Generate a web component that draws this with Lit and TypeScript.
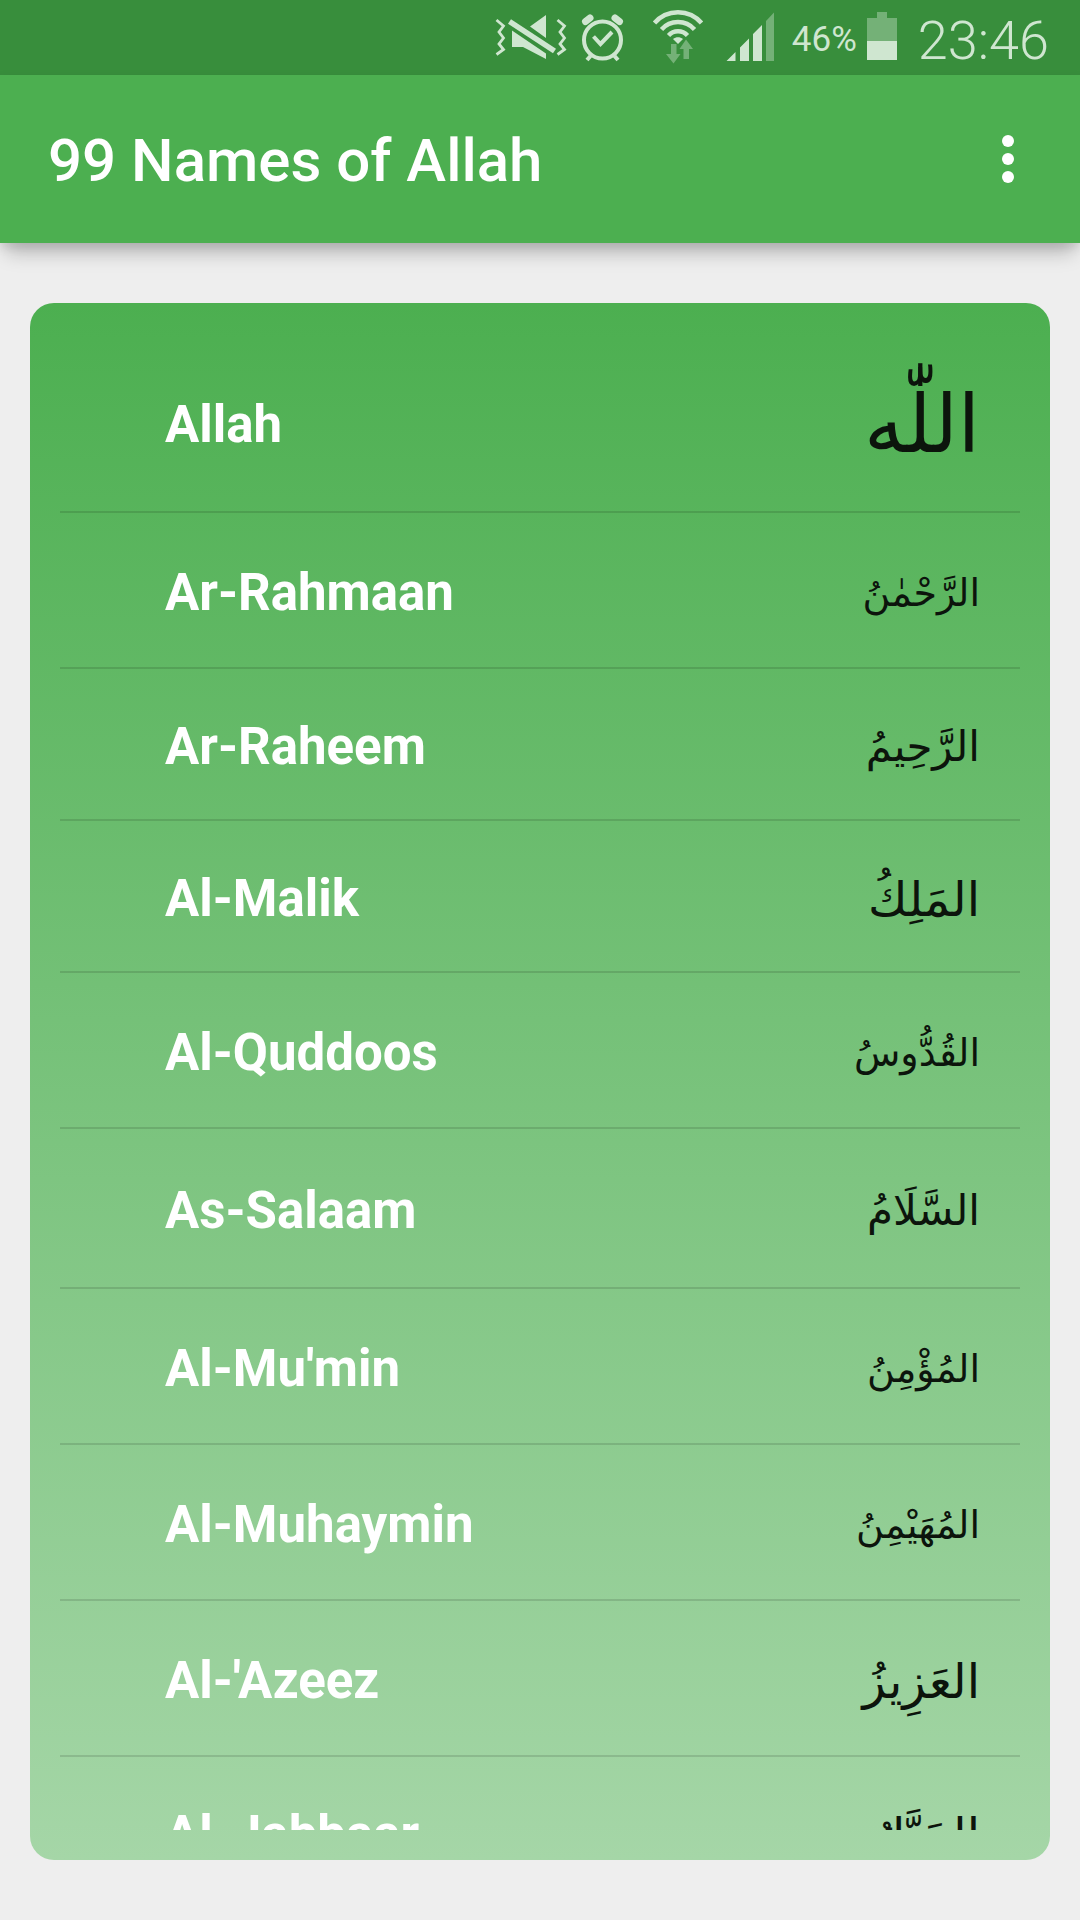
import { LitElement, html, css } from "lit";
import { customElement } from "lit/decorators.js";
import { classMap } from "lit/directives/class-map.js";

interface Name {
  latin: string;
  arabic: string;
  row: "first" | "roomy" | "medium" | "short";
  script: "display" | "large" | "normal" | "small";
}

const NAMES: Name[] = [
  { latin: "Allah", arabic: "اللّٰه", row: "first", script: "display" },
  { latin: "Ar-Rahmaan", arabic: "الرَّحْمٰنُ", row: "medium", script: "small" },
  { latin: "Ar-Raheem", arabic: "الرَّحِيمُ", row: "short", script: "normal" },
  { latin: "Al-Malik", arabic: "المَلِكُ", row: "short", script: "large" },
  { latin: "Al-Quddoos", arabic: "القُدُّوسُ", row: "medium", script: "small" },
  { latin: "As-Salaam", arabic: "السَّلَامُ", row: "roomy", script: "normal" },
  { latin: "Al-Mu'min", arabic: "المُؤْمِنُ", row: "medium", script: "small" },
  { latin: "Al-Muhaymin", arabic: "المُهَيْمِنُ", row: "medium", script: "small" },
  { latin: "Al-'Azeez", arabic: "العَزِيزُ", row: "medium", script: "large" },
  { latin: "Al-Jabbaar", arabic: "الجَبَّارُ", row: "short", script: "large" },
];

@customElement("status-bar")
export class StatusBar extends LitElement {
  static styles = css`
    :host {
      display: flex;
      justify-content: flex-end;
      align-items: center;
      height: 75px;
      padding-right: 31px;
      background: #388e3c;
      color: #cfe6d0;
      font-family: Roboto, "Liberation Sans", sans-serif;
    }
    svg {
      display: block;
      height: 75px;
      flex: none;
      fill: #cfe6d0;
    }
    .line {
      fill: none;
      stroke: #cfe6d0;
    }
    .dim {
      fill: #74b177;
    }
    .mute { width: 74px; margin-right: 12px; }
    .alarm { width: 44px; margin-right: 28px; }
    .wifi { width: 52px; margin-right: 22px; }
    .signal { width: 48px; margin-right: 18px; }
    .battery { width: 30px; margin: 0 21px 0 10px; }
    .percent {
      font-size: 35px;
      line-height: 75px;
      padding-top: 4px;
    }
    .clock {
      font-size: 54px;
      font-weight: 350;
      line-height: 75px;
      padding-top: 6px;
    }
  `;

  render() {
    return html`
      <svg class="mute" viewBox="494 0 74 75" role="img" aria-label="Sound off">
        <path class="line" stroke-width="2.8" d="M496.5 20l7 6-4.500 6 4.500 6-4.500 6 4.500 5.500-7 5M557.500 20l7 6-4.500 6 4.500 6-4.500 6 4.500 5.500-7 5" />
        <path d="M546 15v23l-16-11.500zM512 30.500l34 23V59l-23-12h-11z" />
        <path class="line" stroke-width="5.500" d="M509.500 21.500l45 29.500" />
      </svg>
      <svg class="alarm" viewBox="580 0 44 75" role="img" aria-label="Alarm set">
        <circle class="line" cx="602.500" cy="40" r="18.500" stroke-width="4" />
        <path class="line" stroke-width="4" d="M593.500 36.500l7 7.500 11.500-12M590.500 56l-3.500 4M614.500 56l3.500 4" />
        <path class="line" stroke-width="7" stroke-linecap="round" d="M585.500 21.500l4.500-3.500M619.500 21.500l-4.500-3.500" />
      </svg>
      <svg class="wifi" viewBox="652 0 52 75" role="img" aria-label="Wi-Fi">
        <path class="line" stroke-width="4.500" d="M654.500 23a31 31 0 0 1 47 0M661.500 29.500a22 22 0 0 1 33 0M668.500 35.500a13 13 0 0 1 19 0" />
        <path d="M673 39c3-2.500 7-2.500 10 0l-5 5z" />
        <path class="dim" d="M671 44h5.500v10h4l-7 9.500-7.500-9.500h5zM683.500 59V49h-4l6.500-9.500 7 9.500h-4v10z" />
      </svg>
      <svg class="signal" viewBox="726 0 48 75" role="img" aria-label="Signal strength">
        <path d="M726.500 61l9-9v9zM740 61V47.500l9-9V61zM753 61V34l9-9v36z" />
        <path class="dim" d="M766 61V21l8-8.500V61z" />
      </svg>
      <span class="percent">46%</span>
      <svg class="battery" viewBox="867 0 30 75" role="img" aria-label="Battery">
        <path class="dim" d="M867 18h10v-6h10v6h10v24h-30z" />
        <path d="M867 41h30v19h-30z" />
      </svg>
      <span class="clock">23:46</span>
    `;
  }
}

@customElement("app-root")
export class AppRoot extends LitElement {
  static styles = css`
    :host {
      display: flex;
      flex-direction: column;
      height: 100vh;
      background: #eeeeee;
      color: #ffffff;
      font-family: Roboto, "Liberation Sans", sans-serif;
    }
    .toolbar {
      display: flex;
      align-items: center;
      justify-content: space-between;
      height: 168px;
      flex: none;
      padding: 0 48px;
      background: #4caf50;
      box-shadow: 0 16px 18px -6px rgba(0, 0, 0, 0.22), 0 4px 10px rgba(0, 0, 0, 0.1);
    }
    .title {
      margin: 0;
      padding-top: 4px;
      font-size: 60px;
      line-height: 72px;
      font-weight: 500;
    }
    .more {
      display: flex;
      align-items: center;
      justify-content: center;
      width: 48px;
      height: 72px;
      padding: 0;
      border: 0;
      background: none;
    }
    .more svg {
      width: 12px;
      height: 48px;
      fill: #ffffff;
    }
    .card {
      display: flex;
      flex: 1;
      min-height: 0;
      margin: 60px 30px;
      padding: 30px;
      border-radius: 24px;
      background: linear-gradient(#4caf50, #a5d6a7);
    }
    .list {
      flex: 1;
      margin: 0;
      padding: 0;
      overflow: hidden;
      list-style: none;
    }
    .row {
      display: flex;
      align-items: center;
      justify-content: space-between;
      box-sizing: border-box;
      padding: 6px 40px 0 105px;
      border-bottom: 2px solid rgba(0, 0, 0, 0.12);
    }
    .first { height: 180px; }
    .roomy { height: 160px; }
    .medium { height: 156px; }
    .short { height: 152px; }
    .latin {
      font-size: 51px;
      line-height: 60px;
      font-weight: 700;
    }
    .arabic {
      color: #0c140c;
      font-family: "DejaVu Sans", sans-serif;
      line-height: 80px;
    }
    .display { font-size: 80px; }
    .large { font-size: 48px; }
    .normal { font-size: 42px; }
    .small { font-size: 38px; }
  `;

  render() {
    return html`
      <status-bar></status-bar>
      <header class="toolbar">
        <h1 class="title">99 Names of Allah</h1>
        <button class="more" aria-label="More options">
          <svg viewBox="0 0 12 48" aria-hidden="true">
            <circle cx="6" cy="6" r="6" />
            <circle cx="6" cy="24" r="6" />
            <circle cx="6" cy="42" r="6" />
          </svg>
        </button>
      </header>
      <main class="card">
        <ul class="list">
          ${NAMES.map(
            (n) => html`
              <li class=${classMap({ row: true, [n.row]: true })}>
                <span class="latin">${n.latin}</span>
                <span class=${classMap({ arabic: true, [n.script]: true })} lang="ar" dir="rtl">${n.arabic}</span>
              </li>
            `
          )}
        </ul>
      </main>
    `;
  }
}
